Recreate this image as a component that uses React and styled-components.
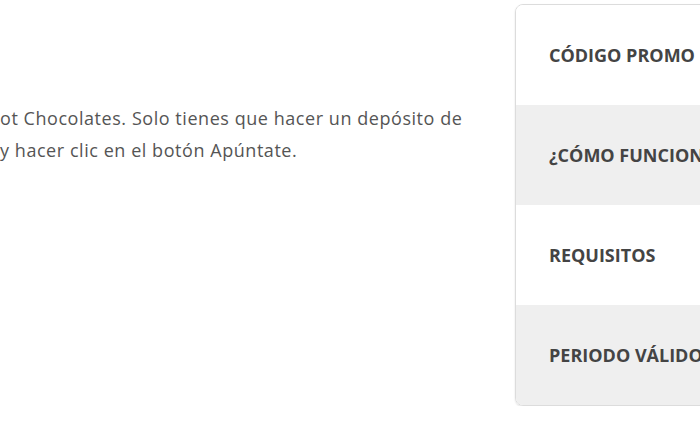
import React from 'react';
import styled, { createGlobalStyle } from 'styled-components';

const GlobalStyle = createGlobalStyle`
  html, body {
    margin: 0;
    padding: 0;
    background: #fff;
    overflow: hidden;
  }
  body {
    font-family: 'Open Sans', 'Noto Sans', sans-serif;
  }
`;

const Page = styled.div`
  display: flex;
  align-items: flex-start;
  width: 900px;
  padding-top: 4px;
`;

const Intro = styled.div`
  flex: 0 0 515px;
  padding-top: 98px;
`;

const Line = styled.p`
  margin: 0;
  white-space: nowrap;
  font-size: 18px;
  letter-spacing: 0.55px;
  line-height: 32px;
  color: #555;
`;

const Card = styled.div`
  flex: 0 0 280px;
  border: 1px solid #dcdcdc;
  border-radius: 8px;
  overflow: hidden;
  box-shadow: 0 1px 2px rgba(0, 0, 0, 0.12);
`;

const Row = styled.div`
  height: 100px;
  display: flex;
  align-items: center;
  padding-left: 33px;
  background: ${(p) => (p.$shaded ? '#efefef' : '#fff')};
`;

const Title = styled.h3`
  margin: 0;
  font-size: 18px;
  font-weight: 700;
  color: #444;
  white-space: nowrap;
`;

const rows = ['CÓDIGO PROMO', '¿CÓMO FUNCIONA?', 'REQUISITOS', 'PERIODO VÁLIDO'];

export default function App() {
  return (
    <>
      <GlobalStyle />
      <Page>
        <Intro>
          <Line>ot Chocolates. Solo tienes que hacer un depósito de</Line>
          <Line>y hacer clic en el botón Apúntate.</Line>
        </Intro>
        <Card>
          {rows.map((r, i) => (
            <Row key={r} $shaded={i % 2 === 1}>
              <Title>{r}</Title>
            </Row>
          ))}
        </Card>
      </Page>
    </>
  );
}
